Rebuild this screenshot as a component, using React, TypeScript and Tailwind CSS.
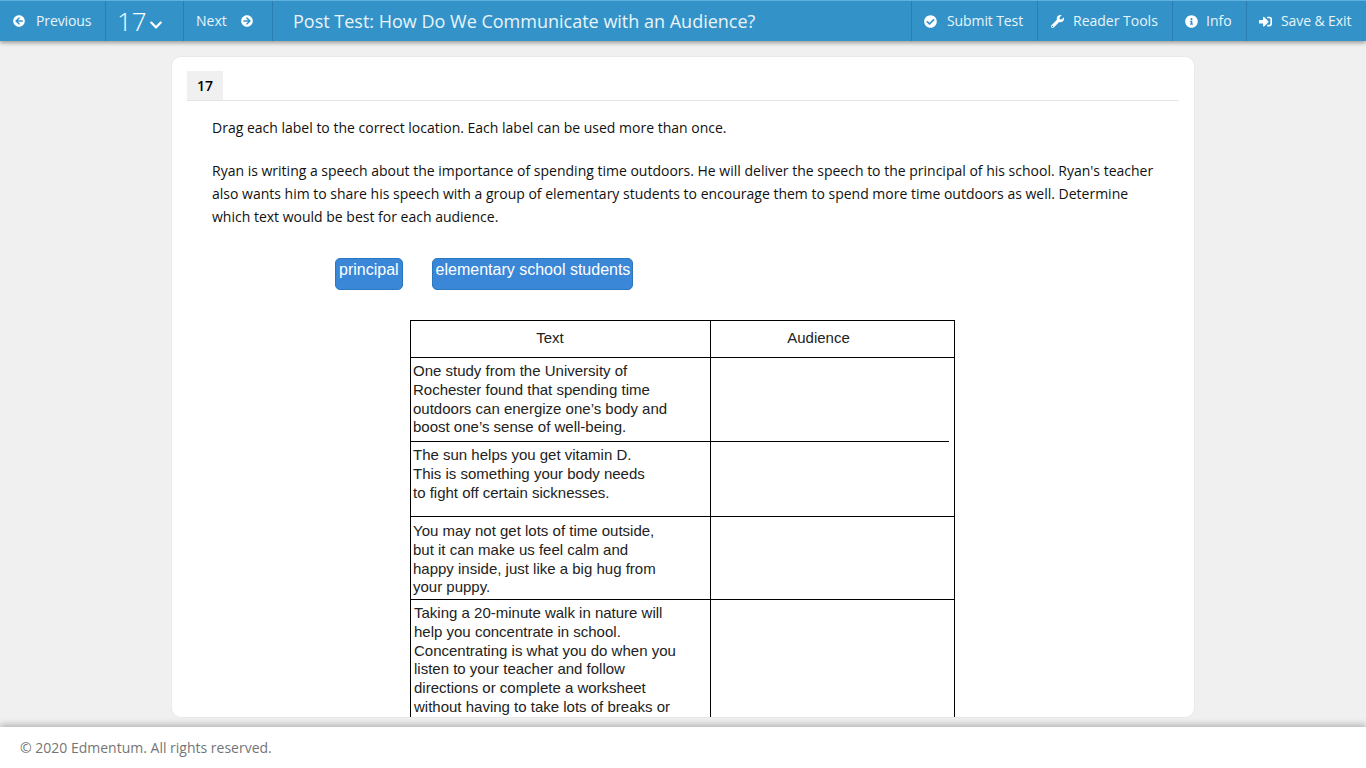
import { FaArrowCircleLeft, FaArrowCircleRight, FaCheckCircle, FaChevronDown, FaInfoCircle, FaSignInAlt, FaWrench } from "react-icons/fa";

function NavBtn({ children, className = "" }: { children: React.ReactNode; className?: string }) {
  return (
    <div className={`flex h-full items-center border-[#2a7fb0] text-[14px] text-[#e8f3fa] ${className}`}>
      {children}
    </div>
  );
}

function Row({ h, lines, last, pad = "pl-[2px]", short, top = "pt-[4px]" }: { h: string; lines: string[]; last?: boolean; pad?: string; short?: boolean; top?: string }) {
  return (
    <div className={`flex ${h} ${last || short ? "" : "border-b border-black"} relative`}>
      <div className={`w-[300px] shrink-0 border-r border-black ${pad} ${top} ${short ? "border-b" : ""}`}>
        {lines.map((l) => (
          <div key={l} className="h-[18.75px] whitespace-nowrap leading-[18.75px]">{l}</div>
        ))}
      </div>
      {short && <div className="h-full w-[238px] border-b border-black" />}
    </div>
  );
}

export default function App() {
  return (
    <div className="flex h-[768px] w-[1366px] flex-col overflow-hidden bg-[#f0f0f0] font-['Open_Sans',sans-serif] text-[14px] text-[#111]">
      <header className="z-10 flex h-[41px] shrink-0 items-stretch border-t border-[#5fb0e0] bg-[#3393c9] shadow-[0_2px_4px_rgba(0,0,0,0.35)]">
        <NavBtn className="w-[106px] border-r pl-[13px]">
          <FaArrowCircleLeft className="mr-[11px] size-[12px] text-white" />
          <span className="tracking-[-0.1px] -translate-y-[1px]">Previous</span>
        </NavBtn>
        <NavBtn className="w-[78px] border-r pl-[11px]">
          <span className="text-[26px] font-light leading-none text-white">17</span>
          <FaChevronDown className="ml-[2px] mt-[8px] size-[14px] text-white" />
        </NavBtn>
        <NavBtn className="w-[89px] border-r pl-[12px]">
          <span className="-translate-y-[1px]">Next</span>
          <FaArrowCircleRight className="ml-[14px] size-[12px] text-white" />
        </NavBtn>
        <div className="flex flex-1 items-center pl-[20px] text-[18px] text-[#e8f3fa]">
          Post Test: How Do We Communicate with an Audience?
        </div>
        <NavBtn className="w-[126px] border-l pl-[12px]">
          <FaCheckCircle className="mr-[10px] size-[13px] text-white" />
          <span className="tracking-[-0.1px] -translate-y-[1px]">Submit Test</span>
        </NavBtn>
        <NavBtn className="w-[135px] border-l pl-[13px]">
          <FaWrench className="mr-[9px] size-[13px] text-white" />
          <span className="-translate-y-[1px]">Reader Tools</span>
        </NavBtn>
        <NavBtn className="w-[74px] border-l pl-[12px]">
          <FaInfoCircle className="mr-[8px] size-[13px] text-white" />
          <span className="-translate-y-[1px]">Info</span>
        </NavBtn>
        <NavBtn className="w-[120px] border-l pl-[12px]">
          <FaSignInAlt className="mr-[9px] size-[13px] text-white" />
          <span className="whitespace-nowrap tracking-[-0.1px] -translate-y-[1px]">Save &amp; Exit</span>
        </NavBtn>
      </header>

      <main className="flex min-h-0 flex-1 justify-center pt-[15px] pb-[9px]">
        <div className="h-full w-[1024px] overflow-hidden rounded-[10px] border border-[#eaeaea] bg-white px-[15px] pt-[14px]">
          <div className="h-[30px] border-b border-[#e4e4e4]">
            <div className="flex h-[29px] w-[36px] items-center justify-center bg-[#f0f0f0] font-semibold text-[14px] text-black">17</div>
          </div>
          <div className="px-[25px] pt-[15px] leading-[23px]">
            <p className="mb-[20px]">Drag each label to the correct location. Each label can be used more than once.</p>
            <p className="w-[950px]">
              Ryan is writing a speech about the importance of spending time outdoors. He will deliver the speech to the principal of his school. Ryan's teacher also wants him to share his speech with a group of elementary students to encourage them to spend more time outdoors as well. Determine which text would be best for each audience.
            </p>
          </div>
          <div className="ml-[148px] mt-[30px] flex gap-[29px] font-['Liberation_Sans',sans-serif] text-[16px] leading-[22px] text-white">
            <div className="h-[32px] rounded-[5px] border border-[#2a78c0] bg-[#3a87d8] px-[3px]">principal</div>
            <div className="h-[32px] rounded-[5px] border border-[#2a78c0] bg-[#3a87d8] pl-[3px] pr-[2px]">elementary school students</div>
          </div>
          <div className="ml-[223px] mt-[30px] w-[545px] border border-b-0 border-black font-['Liberation_Sans',sans-serif] text-[15px] text-[#222]">
            <div className="flex h-[37px] border-b border-black">
              <div className="w-[300px] shrink-0 border-r border-black pr-[21px] pt-[6px] text-center">Text</div>
              <div className="flex-1 pr-[28px] pt-[6px] text-center">Audience</div>
            </div>
            <Row h="h-[84px]" short lines={["One study from the University of", "Rochester found that spending time", "outdoors can energize one’s body and", "boost one’s sense of well-being."]} />
            <Row h="h-[75px]" lines={["The sun helps you get vitamin D.", "This is something your body needs", "to fight off certain sicknesses."]} />
            <Row h="h-[83px]" top="pt-[5px]" lines={["You may not get lots of time outside,", "but it can make us feel calm and", "happy inside, just like a big hug from", "your puppy."]} />
            <Row h="h-[140px]" last pad="pl-[3px]" lines={["Taking a 20-minute walk in nature will", "help you concentrate in school.", "Concentrating is what you do when you", "listen to your teacher and follow", "directions or complete a worksheet", "without having to take lots of breaks or"]} />
          </div>
        </div>
      </main>

      <footer className="relative z-10 flex h-[41px] shrink-0 items-center bg-white pl-[20px] text-[14px] text-[#757575] shadow-[0_-3px_6px_rgba(0,0,0,0.22)]">
        © 2020 Edmentum. All rights reserved.
      </footer>
    </div>
  );
}
